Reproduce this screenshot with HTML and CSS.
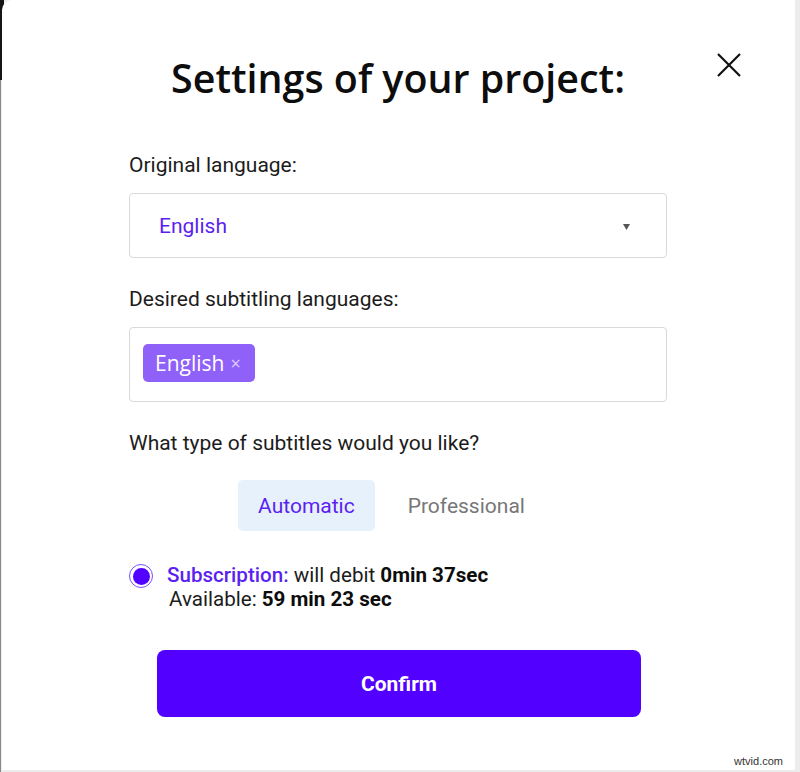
FILE: index.html
```html
<!DOCTYPE html>
<html lang="en">
<head>
<meta charset="utf-8">
<title>Settings of your project</title>
<link rel="stylesheet" href="styles.css">
</head>
<body>
<div class="modal">
  <button class="close" aria-label="Close">
    <svg width="24" height="24" viewBox="0 0 24 24"><path d="M1 1L23 23M23 1L1 23" stroke="#111" stroke-width="2.2" fill="none"/></svg>
  </button>
  <h1 class="title">Settings of your project:</h1>
  <div class="form">
    <div class="field">
      <div class="label">Original language:</div>
      <div class="select">
        <span class="select-value">English</span>
        <svg class="caret" width="7" height="6" viewBox="0 0 7 6"><path d="M0 0H7L3.5 6Z" fill="#555"/></svg>
      </div>
    </div>
    <div class="field">
      <div class="label">Desired subtitling languages:</div>
      <div class="multi">
        <span class="tag">English <span class="tag-x">×</span></span>
      </div>
    </div>
    <div class="field">
      <div class="label">What type of subtitles would you like?</div>
      <div class="tabs">
        <span class="tab active">Automatic</span>
        <span class="tab">Professional</span>
      </div>
    </div>
    <div class="plan">
      <span class="radio"><span class="radio-dot"></span></span>
      <div class="plan-text">
        <div><span class="plan-name">Subscription:</span> will debit <b>0min 37sec</b></div>
        <div class="plan-avail">Available: <b>59 min 23 sec</b></div>
      </div>
    </div>
    <div class="actions">
      <button class="confirm">Confirm</button>
    </div>
  </div>
  <span class="watermark">wtvid.com</span>
</div>
</body>
</html>
```
FILE: styles.css
```css
html, body {
  margin: 0;
  padding: 0;
}
body {
  width: 800px;
  height: 772px;
  overflow: hidden;
  background:
    linear-gradient(#151515, #151515) left top / 4px 80px no-repeat,
    linear-gradient(#8a8a8a, #8a8a8a) left top / 1px 100% no-repeat,
    #ececec;
  font-family: Roboto, "Liberation Sans", sans-serif;
  color: #1c1c1c;
}
.modal {
  position: relative;
  box-sizing: border-box;
  width: 793px;
  height: 770px;
  margin-left: 2px;
  background: #fff;
  border-top-left-radius: 10px;
  padding: 54px 128px 0 127px;
}
.close {
  position: absolute;
  top: 53px;
  right: 54px;
  width: 24px;
  height: 24px;
  padding: 0;
  border: 0;
  background: none;
  display: flex;
}
.title {
  margin: 0;
  font-family: "Open Sans", sans-serif;
  font-weight: 600;
  font-size: 39.4px;
  line-height: 48px;
  text-align: center;
  color: #0d0d0d;
}
.form {
  margin-top: 51px;
  display: flex;
  flex-direction: column;
}
.field {
  display: flex;
  flex-direction: column;
  margin-bottom: 29px;
}
.label {
  font-size: 21px;
  line-height: 25px;
  margin-bottom: 15px;
  color: #1c1c1c;
}
.select {
  box-sizing: border-box;
  height: 65px;
  border: 1px solid #d9d9d9;
  border-radius: 4px;
  display: flex;
  align-items: center;
  justify-content: space-between;
  padding: 2px 36px 0 29px;
}
.select-value {
  font-size: 21px;
  line-height: 25px;
  color: #5b1ff0;
}
.caret {
  display: block;
}
.multi {
  box-sizing: border-box;
  height: 75px;
  border: 1px solid #d9d9d9;
  border-radius: 4px;
  padding: 16px 13px;
  display: flex;
  align-items: flex-start;
}
.tag {
  box-sizing: border-box;
  height: 38px;
  display: inline-flex;
  align-items: center;
  gap: 6px;
  padding: 0 14px 0 12px;
  background: #9061f9;
  border-radius: 5px;
  color: #fff;
  font-family: "Open Sans", sans-serif;
  font-size: 21px;
}
.tag-x {
  font-size: 18px;
  color: #dccdff;
}
.field:nth-child(3) {
  margin-bottom: 32px;
}
.field:nth-child(3) .label {
  margin-bottom: 24px;
}
.tabs {
  display: flex;
  justify-content: center;
  gap: 13px;
  padding-right: 13px;
}
.tab {
  padding: 14px 20px 12px;
  font-size: 21px;
  line-height: 25px;
  color: #777;
  border-radius: 5px;
}
.tab.active {
  background: #e7f1fc;
  color: #5b1ff0;
}
.plan {
  display: flex;
  align-items: flex-start;
  gap: 14px;
  font-size: 20.6px;
  line-height: 24px;
  color: #1c1c1c;
}
.radio {
  box-sizing: border-box;
  width: 24px;
  height: 24px;
  margin-top: 1px;
  border: 1.5px solid #7a4cff;
  border-radius: 50%;
  display: flex;
  align-items: center;
  justify-content: center;
  flex: none;
}
.radio-dot {
  width: 17px;
  height: 17px;
  border-radius: 50%;
  background: #5200ff;
}
.plan-text b {
  font-weight: 700;
  color: #0d0d0d;
}
.plan-avail {
  padding-left: 2px;
}
.plan-name {
  color: #5b1ff0;
  font-weight: 500;
}
.actions {
  display: flex;
  justify-content: center;
  margin-top: 39px;
}
.confirm {
  width: 484px;
  height: 67px;
  border: 0;
  border-radius: 8px;
  background: #5200ff;
  color: #fff;
  font-family: Roboto, "Liberation Sans", sans-serif;
  font-weight: 700;
  font-size: 21px;
  margin-left: 2px;
}
.watermark {
  position: absolute;
  right: 12px;
  bottom: 3px;
  font-family: "Liberation Sans", sans-serif;
  font-size: 11px;
  color: #333;
}
```
